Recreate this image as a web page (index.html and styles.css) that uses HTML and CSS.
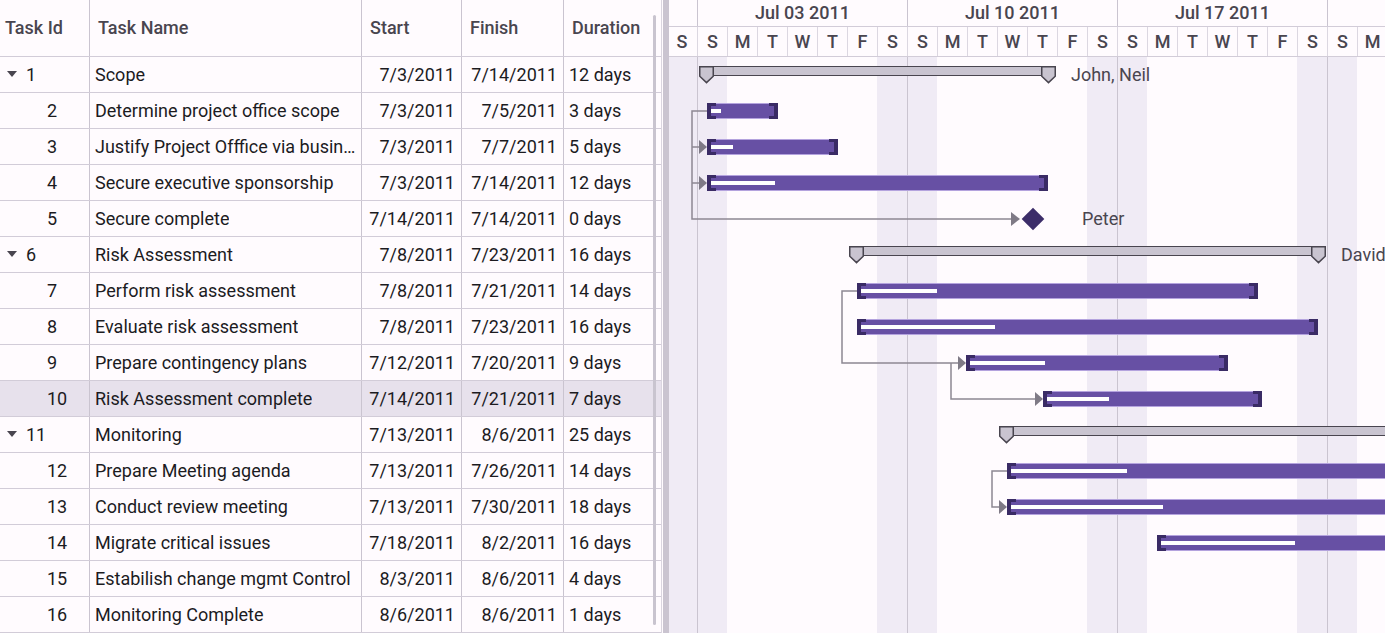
FILE: index.html
```html
<!DOCTYPE html>
<html>
<head>
<meta charset="utf-8">
<title>Gantt</title>
<link rel="stylesheet" href="styles.css">
</head>
<body>
<div class="gantt">
  <div class="grid-pane">
    <div class="grid-head">
      <div class="cell idh">Task Id</div>
      <div class="cell">Task Name</div>
      <div class="cell">Start</div>
      <div class="cell">Finish</div>
      <div class="cell last">Duration</div>
    </div>
    <div class="grid-row"><div class="cell id"><span class="tog"><i class="tri"></i></span>1</div><div class="cell name"><span>Scope</span></div><div class="cell right">7/3/2011</div><div class="cell right">7/14/2011</div><div class="cell dur last">12 days</div></div>
    <div class="grid-row"><div class="cell id child"><span class="tog"></span>2</div><div class="cell name"><span>Determine project office scope</span></div><div class="cell right">7/3/2011</div><div class="cell right">7/5/2011</div><div class="cell dur last">3 days</div></div>
    <div class="grid-row"><div class="cell id child"><span class="tog"></span>3</div><div class="cell name"><span>Justify Project Offfice via business plan</span></div><div class="cell right">7/3/2011</div><div class="cell right">7/7/2011</div><div class="cell dur last">5 days</div></div>
    <div class="grid-row"><div class="cell id child"><span class="tog"></span>4</div><div class="cell name"><span>Secure executive sponsorship</span></div><div class="cell right">7/3/2011</div><div class="cell right">7/14/2011</div><div class="cell dur last">12 days</div></div>
    <div class="grid-row"><div class="cell id child"><span class="tog"></span>5</div><div class="cell name"><span>Secure complete</span></div><div class="cell right">7/14/2011</div><div class="cell right">7/14/2011</div><div class="cell dur last">0 days</div></div>
    <div class="grid-row"><div class="cell id"><span class="tog"><i class="tri"></i></span>6</div><div class="cell name"><span>Risk Assessment</span></div><div class="cell right">7/8/2011</div><div class="cell right">7/23/2011</div><div class="cell dur last">16 days</div></div>
    <div class="grid-row"><div class="cell id child"><span class="tog"></span>7</div><div class="cell name"><span>Perform risk assessment</span></div><div class="cell right">7/8/2011</div><div class="cell right">7/21/2011</div><div class="cell dur last">14 days</div></div>
    <div class="grid-row"><div class="cell id child"><span class="tog"></span>8</div><div class="cell name"><span>Evaluate risk assessment</span></div><div class="cell right">7/8/2011</div><div class="cell right">7/23/2011</div><div class="cell dur last">16 days</div></div>
    <div class="grid-row"><div class="cell id child"><span class="tog"></span>9</div><div class="cell name"><span>Prepare contingency plans</span></div><div class="cell right">7/12/2011</div><div class="cell right">7/20/2011</div><div class="cell dur last">9 days</div></div>
    <div class="grid-row selected"><div class="cell id child"><span class="tog"></span>10</div><div class="cell name"><span>Risk Assessment complete</span></div><div class="cell right">7/14/2011</div><div class="cell right">7/21/2011</div><div class="cell dur last">7 days</div></div>
    <div class="grid-row"><div class="cell id"><span class="tog"><i class="tri"></i></span>11</div><div class="cell name"><span>Monitoring</span></div><div class="cell right">7/13/2011</div><div class="cell right">8/6/2011</div><div class="cell dur last">25 days</div></div>
    <div class="grid-row"><div class="cell id child"><span class="tog"></span>12</div><div class="cell name"><span>Prepare Meeting agenda</span></div><div class="cell right">7/13/2011</div><div class="cell right">7/26/2011</div><div class="cell dur last">14 days</div></div>
    <div class="grid-row"><div class="cell id child"><span class="tog"></span>13</div><div class="cell name"><span>Conduct review meeting</span></div><div class="cell right">7/13/2011</div><div class="cell right">7/30/2011</div><div class="cell dur last">18 days</div></div>
    <div class="grid-row"><div class="cell id child"><span class="tog"></span>14</div><div class="cell name"><span>Migrate critical issues</span></div><div class="cell right">7/18/2011</div><div class="cell right">8/2/2011</div><div class="cell dur last">16 days</div></div>
    <div class="grid-row"><div class="cell id child"><span class="tog"></span>15</div><div class="cell name"><span>Estabilish change mgmt Control</span></div><div class="cell right">8/3/2011</div><div class="cell right">8/6/2011</div><div class="cell dur last">4 days</div></div>
    <div class="grid-row"><div class="cell id child"><span class="tog"></span>16</div><div class="cell name"><span>Monitoring Complete</span></div><div class="cell right">8/6/2011</div><div class="cell right">8/6/2011</div><div class="cell dur last">1 days</div></div>
    <div class="scroll-thumb"></div>
  </div>

  <div class="splitter"><div class="splitter-bar"></div></div>

  <div class="chart-pane">
    <div class="chart">
      <div class="tier-top">
        <div class="week lead"></div>
        <div class="week">Jul 03 2011</div>
        <div class="week">Jul 10 2011</div>
        <div class="week">Jul 17 2011</div>
        <div class="week">Jul 24 2011</div>
      </div>
      <div class="tier-days">
        <div class="day first">S</div><div class="day">S</div><div class="day">M</div><div class="day">T</div><div class="day">W</div><div class="day">T</div><div class="day">F</div>
        <div class="day">S</div><div class="day">S</div><div class="day">M</div><div class="day">T</div><div class="day">W</div><div class="day">T</div><div class="day">F</div>
        <div class="day">S</div><div class="day">S</div><div class="day">M</div><div class="day">T</div><div class="day">W</div><div class="day">T</div><div class="day">F</div>
        <div class="day">S</div><div class="day">S</div><div class="day">M</div>
      </div>
      <div class="chart-body">
        <div class="cols">
          <div class="col we"></div><div class="col we wk"></div><div class="col"></div><div class="col"></div><div class="col"></div><div class="col"></div><div class="col"></div>
          <div class="col we"></div><div class="col we wk"></div><div class="col"></div><div class="col"></div><div class="col"></div><div class="col"></div><div class="col"></div>
          <div class="col we"></div><div class="col we wk"></div><div class="col"></div><div class="col"></div><div class="col"></div><div class="col"></div><div class="col"></div>
          <div class="col we"></div><div class="col we wk"></div><div class="col"></div>
        </div>
        <svg class="links" width="720" height="576" viewBox="0 0 720 576">
          <g fill="none" stroke="#8d8893" stroke-width="1.5">
            <path d="M40 54H25V162H345M25 90H33M25 126H33"/>
            <path d="M190 234H175V306H292"/>
            <path d="M284 306V342H369"/>
            <path d="M340 414H325V450H333"/>
          </g>
          <g fill="#7f7a86">
            <path d="M32 83L40 90L32 97Z"/>
            <path d="M32 119L40 126L32 133Z"/>
            <path d="M344 155L353 162L344 169Z"/>
            <path d="M291 299L299 306L291 313Z"/>
            <path d="M368 335L376 342L368 349Z"/>
            <path d="M332 443L340 450L332 457Z"/>
          </g>
        </svg>
        <div class="rows">
          <div class="row">
            <div class="summary" style="left:32px;width:357px"><div class="summary-line"></div><svg class="handle hl" width="15" height="18" viewBox="0 0 15 18"><path d="M0.75 0.75H14.25V10.2L7.5 16.6L0.75 10.2Z"/></svg><svg class="handle hr" width="15" height="18" viewBox="0 0 15 18"><path d="M0.75 0.75H14.25V10.2L7.5 16.6L0.75 10.2Z"/></svg></div>
            <div class="lbl" style="left:404px">John, Neil</div>
          </div>
          <div class="row"><div class="bar" style="left:40px;width:71px"><i class="prog" style="width:10px"></i><i class="cap-l"></i><i class="cap-r"></i></div></div>
          <div class="row"><div class="bar" style="left:40px;width:131px"><i class="prog" style="width:22px"></i><i class="cap-l"></i><i class="cap-r"></i></div></div>
          <div class="row"><div class="bar" style="left:40px;width:341px"><i class="prog" style="width:64px"></i><i class="cap-l"></i><i class="cap-r"></i></div></div>
          <div class="row">
            <div class="ms" style="left:358px"></div>
            <div class="lbl" style="left:415px">Peter</div>
          </div>
          <div class="row">
            <div class="summary" style="left:182px;width:477px"><div class="summary-line"></div><svg class="handle hl" width="15" height="18" viewBox="0 0 15 18"><path d="M0.75 0.75H14.25V10.2L7.5 16.6L0.75 10.2Z"/></svg><svg class="handle hr" width="15" height="18" viewBox="0 0 15 18"><path d="M0.75 0.75H14.25V10.2L7.5 16.6L0.75 10.2Z"/></svg></div>
            <div class="lbl" style="left:674px">David</div>
          </div>
          <div class="row"><div class="bar" style="left:190px;width:401px"><i class="prog" style="width:76px"></i><i class="cap-l"></i><i class="cap-r"></i></div></div>
          <div class="row"><div class="bar" style="left:190px;width:461px"><i class="prog" style="width:134px"></i><i class="cap-l"></i><i class="cap-r"></i></div></div>
          <div class="row"><div class="bar" style="left:299px;width:262px"><i class="prog" style="width:75px"></i><i class="cap-l"></i><i class="cap-r"></i></div></div>
          <div class="row"><div class="bar" style="left:376px;width:219px"><i class="prog" style="width:62px"></i><i class="cap-l"></i><i class="cap-r"></i></div></div>
          <div class="row">
            <div class="summary" style="left:332px;width:480px"><div class="summary-line"></div><svg class="handle hl" width="15" height="18" viewBox="0 0 15 18"><path d="M0.75 0.75H14.25V10.2L7.5 16.6L0.75 10.2Z"/></svg></div>
          </div>
          <div class="row"><div class="bar" style="left:340px;width:401px"><i class="prog" style="width:116px"></i><i class="cap-l"></i><i class="cap-r"></i></div></div>
          <div class="row"><div class="bar" style="left:340px;width:521px"><i class="prog" style="width:152px"></i><i class="cap-l"></i><i class="cap-r"></i></div></div>
          <div class="row"><div class="bar" style="left:490px;width:461px"><i class="prog" style="width:134px"></i><i class="cap-l"></i><i class="cap-r"></i></div></div>
          <div class="row"></div>
          <div class="row"></div>
        </div>
      </div>
    </div>
  </div>
</div>
</body>
</html>
```

FILE: styles.css
```css
* { box-sizing: border-box; }

body {
  margin: 0;
  font-family: Roboto, "Liberation Sans", sans-serif;
  font-size: 18px;
  color: #1c1b1f;
  background: #fffbfe;
  overflow: hidden;
}

.gantt {
  display: flex;
  width: 1385px;
  height: 633px;
}

/* ---------- grid ---------- */
.grid-pane {
  position: relative;
  width: 661px;
  flex: none;
}

.grid-head,
.grid-row {
  display: grid;
  grid-template-columns: 90px 272px 100px 102px 97px;
  border-bottom: 1px solid #d2ccd8;
}

.grid-head { height: 57px; }
.grid-row { height: 36px; }
.grid-row.selected { background: #e7e1ec; }

.cell {
  display: flex;
  align-items: center;
  min-width: 0;
  padding: 0 6px;
  border-right: 1px solid #cac4d0;
  white-space: nowrap;
  overflow: hidden;
}
.cell.last { border-right: none; }

.grid-head .cell {
  padding-left: 8px;
  padding-bottom: 2px;
  font-weight: 500;
  color: #49454f;
}
.grid-head .cell.idh { padding-left: 5px; }

.cell.id { padding-left: 5px; }
.cell.id.child { padding-left: 26px; }

.tog {
  width: 21px;
  flex: none;
  display: flex;
  align-items: center;
  padding-left: 2px;
}
.tri {
  width: 0;
  height: 0;
  border-left: 5px solid transparent;
  border-right: 5px solid transparent;
  border-top: 6px solid #49454f;
  margin-top: -1px;
}

.cell.name {
  padding-left: 5px;
  padding-right: 2px;
}
.cell.name span {
  overflow: hidden;
  text-overflow: ellipsis;
  white-space: nowrap;
  min-width: 0;
}

.cell.right { justify-content: flex-end; }
.cell.dur { padding-left: 5px; }

.scroll-thumb {
  position: absolute;
  left: 653px;
  top: 15px;
  bottom: 8px;
  width: 3px;
  border-radius: 2px;
  background: #c9c4cf;
}

/* ---------- splitter ---------- */
.splitter {
  width: 8px;
  flex: none;
  display: flex;
  border-left: 1px solid #dad5df;
}
.splitter-bar {
  margin-left: 1px;
  width: 6px;
  background: #cac4d0;
}

/* ---------- chart ---------- */
.chart-pane {
  flex: 1;
  overflow: hidden;
}
.chart {
  margin-left: -2px;
  width: 720px;
}

.tier-top {
  display: flex;
  height: 27px;
  border-bottom: 1px solid #d2ccd8;
}
.week {
  flex: none;
  width: 210px;
  display: flex;
  align-items: center;
  justify-content: center;
  padding-bottom: 2px;
  border-left: 1px solid #cac4d0;
  font-weight: 500;
  color: #49454f;
  white-space: nowrap;
}
.week.lead {
  width: 30px;
  border-left: none;
}

.tier-days {
  display: flex;
  height: 30px;
  border-bottom: 1px solid #d2ccd8;
}
.day {
  flex: none;
  width: 30px;
  display: flex;
  align-items: center;
  justify-content: center;
  border-left: 1px solid #dcd7e1;
  font-weight: 500;
  color: #49454f;
}
.day.first { border-left: none; }

.chart-body {
  position: relative;
  height: 576px;
}

.cols {
  display: flex;
  height: 100%;
}
.col {
  flex: none;
  width: 30px;
}
.col.we { background: #f0ebf5; }
.col.wk { border-left: 1px solid #cac4d0; }

.links {
  position: absolute;
  left: 0;
  top: 0;
}

.rows {
  position: absolute;
  left: 0;
  top: 0;
  right: 0;
  bottom: 0;
}
.row {
  position: relative;
  height: 36px;
}

/* task bar */
.bar {
  position: absolute;
  top: 10px;
  height: 16px;
  background: #6750a4;
  box-shadow: inset 0 1px 0 #b4a3de, inset 0 -1px 0 #b4a3de;
}
.prog {
  position: absolute;
  left: 4px;
  top: 6px;
  height: 4px;
  background: #ffffff;
}
.cap-l,
.cap-r {
  position: absolute;
  top: 0;
  bottom: 0;
  width: 9px;
  border-top: 3px solid #3a2b65;
  border-bottom: 3px solid #3a2b65;
}
.cap-l {
  left: 0;
  border-left: 4px solid #3a2b65;
}
.cap-r {
  right: 0;
  border-right: 4px solid #3a2b65;
}

/* summary bar */
.summary {
  position: absolute;
  top: 9px;
  height: 18px;
}
.summary-line {
  position: absolute;
  left: 0;
  right: 0;
  top: 0;
  height: 10px;
  background: #c9c4d0;
  border: 1.5px solid #49454f;
}
.handle {
  position: absolute;
  top: 0;
  fill: #c9c4d0;
  stroke: #49454f;
  stroke-width: 1.5;
}
.handle.hl { left: 0; }
.handle.hr { right: 0; }

/* milestone */
.ms {
  position: absolute;
  top: 10px;
  width: 16px;
  height: 16px;
  background: #3c2d69;
  transform: rotate(45deg);
}

.lbl {
  position: absolute;
  top: 0;
  line-height: 36px;
  color: #49454f;
  white-space: nowrap;
}
```
